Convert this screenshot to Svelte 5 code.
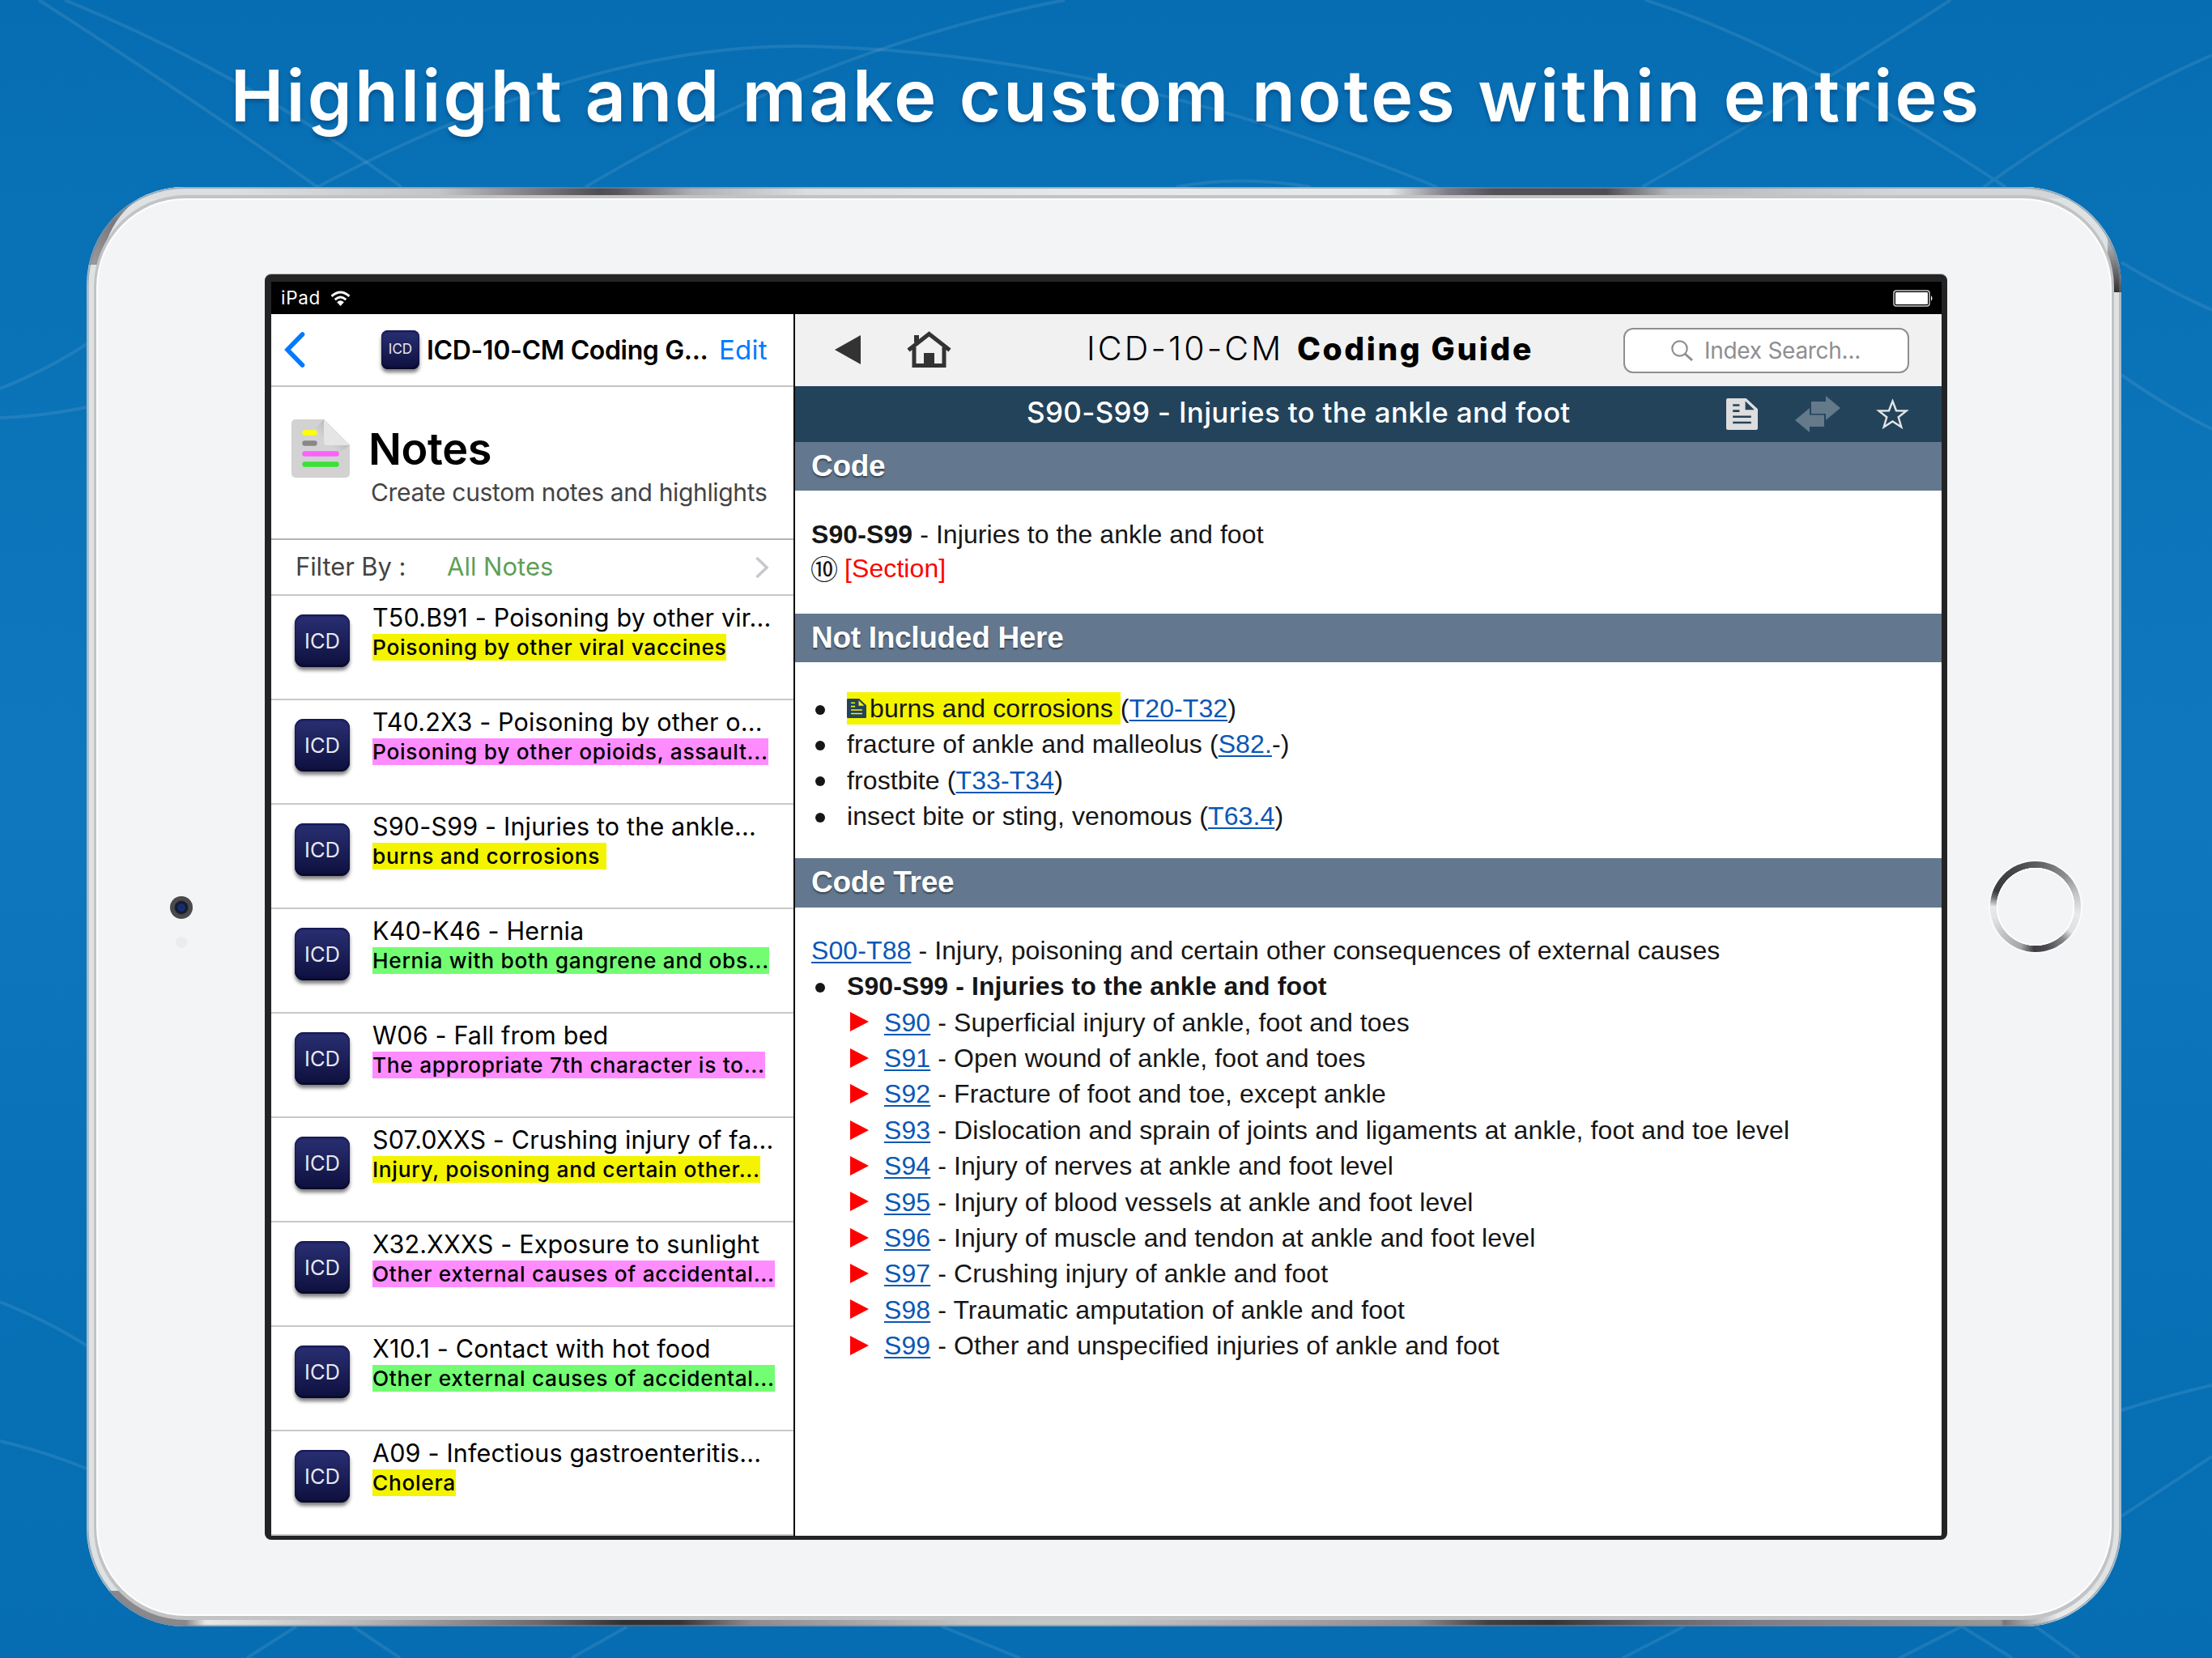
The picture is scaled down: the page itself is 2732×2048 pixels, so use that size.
<script>
  const notes = [
    { title: 'T50.B91 - Poisoning by other vir...', text: 'Poisoning by other viral vaccines', tone: 'yellow' },
    { title: 'T40.2X3 - Poisoning by other o...', text: 'Poisoning by other opioids, assault...', tone: 'pink' },
    { title: 'S90-S99 - Injuries to the ankle...', text: 'burns and corrosions ', tone: 'yellow' },
    { title: 'K40-K46 - Hernia', text: 'Hernia with both gangrene and obs...', tone: 'green' },
    { title: 'W06 - Fall from bed', text: 'The appropriate 7th character is to...', tone: 'pink' },
    { title: 'S07.0XXS - Crushing injury of fa...', text: 'Injury, poisoning and certain other...', tone: 'yellow' },
    { title: 'X32.XXXS - Exposure to sunlight', text: 'Other external causes of accidental...', tone: 'pink' },
    { title: 'X10.1 - Contact with hot food', text: 'Other external causes of accidental...', tone: 'green' },
    { title: 'A09 - Infectious gastroenteritis...', text: 'Cholera', tone: 'yellow' }
  ];

  const excluded = [
    { text: 'fracture of ankle and malleolus', link: 'S82.', tail: '-' },
    { text: 'frostbite', link: 'T33-T34', tail: '' },
    { text: 'insect bite or sting, venomous', link: 'T63.4', tail: '' }
  ];

  const tree = [
    ['S90', 'Superficial injury of ankle, foot and toes'],
    ['S91', 'Open wound of ankle, foot and toes'],
    ['S92', 'Fracture of foot and toe, except ankle'],
    ['S93', 'Dislocation and sprain of joints and ligaments at ankle, foot and toe level'],
    ['S94', 'Injury of nerves at ankle and foot level'],
    ['S95', 'Injury of blood vessels at ankle and foot level'],
    ['S96', 'Injury of muscle and tendon at ankle and foot level'],
    ['S97', 'Crushing injury of ankle and foot'],
    ['S98', 'Traumatic amputation of ankle and foot'],
    ['S99', 'Other and unspecified injuries of ankle and foot']
  ];
</script>

{#snippet page(cls)}
  <svg class={cls} viewBox="0 0 38 38" preserveAspectRatio="none">
    <path
      fill="currentColor"
      fill-rule="evenodd"
      d="M2 0H24L38 13V36a2 2 0 0 1-2 2H2a2 2 0 0 1-2-2V2A2 2 0 0 1 2 0ZM23 3.500V14H34ZM8 7H16V9.500H8ZM8 14H16V16.500H8ZM8 21H30V23.500H8ZM8 28H30V30.500H8Z"
    />
  </svg>
{/snippet}

<div class="page">
  <svg class="backdrop" viewBox="0 0 2732 2048">
    <g class="arcs">
      <path d="M48 0Q250 130 392 231M80 0Q300 90 496 231" />
      <path d="M392 231Q720 57 984 57Q1364 62 1775 231" />
      <path d="M723 231Q1010 60 1315 0" />
      <path d="M2032 0Q2220 60 2477 231M2409 0Q2240 110 2028 231M2732 68Q2590 130 2450 231" />
      <path d="M1453 231Q1531 216 1619 231" />
      <path d="M0 480Q60 456 107 425M0 516Q55 514 107 503M0 1608Q60 1632 107 1662M0 1780Q55 1793 107 1814" />
      <path d="M2620 324Q2680 360 2732 383M2620 463Q2680 505 2732 530M2620 1742Q2680 1723 2732 1711M2620 1873L2732 1799" />
      <path d="M366 2009L305 2048M436 2009L494 2048M775 2009L706 2048M1163 2009L1260 2048M2080 2009L2004 2048M2346 2048L2423 2009L2485 2048M2514 2009L2568 2048" />
    </g>
  </svg>

  <h1>Highlight and make custom notes within entries</h1>

  <div class="device">
    <svg class="shell" viewBox="0 0 2513 1778">
      <defs>
        <clipPath id="body"><rect width="2513" height="1778" rx="121" /></clipPath>
        <linearGradient id="top" x1="0" x2="1">
          <stop offset=".05" stop-color="#dcdfe0" /><stop offset=".157" stop-color="#c5c5c7" />
          <stop offset=".205" stop-color="#807d82" /><stop offset=".24" stop-color="#504d52" />
          <stop offset=".25" stop-color="#5a575c" /><stop offset=".288" stop-color="#b0b0b3" />
          <stop offset=".347" stop-color="#dadedf" /><stop offset=".5" stop-color="#e8e9e8" />
          <stop offset=".648" stop-color="#e5e7e7" /><stop offset=".678" stop-color="#807d85" />
          <stop offset=".702" stop-color="#545157" /><stop offset=".76" stop-color="#504d52" />
          <stop offset=".793" stop-color="#b5b6b9" /><stop offset=".91" stop-color="#d3d6d8" />
        </linearGradient>
        <linearGradient id="bottom" x1="0" x2="1">
          <stop offset=".04" stop-color="#8a888b" /><stop offset=".05" stop-color="#e8e8e8" />
          <stop offset=".128" stop-color="#b8b7b9" /><stop offset=".216" stop-color="#6e6a70" />
          <stop offset=".26" stop-color="#313035" /><stop offset=".288" stop-color="#353439" />
          <stop offset=".323" stop-color="#8f8a8e" /><stop offset=".435" stop-color="#c4c4c4" />
          <stop offset=".5" stop-color="#c4c6c6" /><stop offset=".562" stop-color="#b3aeb3" />
          <stop offset=".658" stop-color="#8f8b90" /><stop offset=".694" stop-color="#404045" />
          <stop offset=".725" stop-color="#333338" /><stop offset=".777" stop-color="#66646b" />
          <stop offset=".833" stop-color="#7f7d86" /><stop offset=".951" stop-color="#989898" />
          <stop offset=".953" stop-color="#77757b" /><stop offset=".98" stop-color="#e8eaea" />
        </linearGradient>
        <linearGradient id="corner" x1="0" y1="1" x2="1" y2="0">
          <stop stop-color="#a9a9ab" /><stop offset=".55" stop-color="#7a787c" /><stop offset="1" stop-color="#a9a9ab" />
        </linearGradient>
        <linearGradient id="side" x1="0" y1="0" x2="0" y2="1">
          <stop stop-color="#d9dcdd" /><stop offset="1" stop-color="#333237" />
        </linearGradient>
      </defs>
      <g clip-path="url(#body)">
        <rect width="2513" height="1778" fill="#dfe2e2" />
        <rect x="60" width="2390" height="14" fill="url(#top)" />
        <path d="M0 125V96H20V84Q30 36 70 10L56 0H0Z" fill="url(#corner)" />
        <path d="M2496 50H2513V130H2496Z" fill="url(#side)" />
        <rect x="24" y="1734" width="2460" height="44" fill="url(#bottom)" />
        <rect x="1.500" y="1" width="2510" height="1776" rx="120" fill="none" stroke="#6c8ca3" stroke-opacity=".6" stroke-width="2" />
      </g>
      <rect x="9" y="10" width="2495" height="1760" rx="113" fill="#c1c3c5" />
      <rect x="12" y="14" width="2489" height="1751" rx="110" fill="#fff" />
      <rect x="14" y="16" width="2485" height="1747" rx="108" fill="#f3f4f6" />
    </svg>

    <div class="side left">
      <span class="camera"></span>
      <span class="sensor"></span>
    </div>

    <div class="screen">
      <div class="status">
        <span class="carrier">iPad</span>
        <svg class="wifi" viewBox="0 0 24 18">
          <path d="M1.500 6.500Q12-3 22.500 6.500M5.500 10.500Q12 4.500 18.500 10.500" fill="none" stroke="#fff" stroke-width="2.800" />
          <path d="M12 18L7.800 13.500Q12 10 16.200 13.500Z" fill="#fff" />
        </svg>
        <svg class="battery" viewBox="0 0 50 21">
          <rect x="1" y="1" width="44" height="19" rx="3" fill="none" stroke="#ccc" stroke-width="1.500" />
          <rect x="3" y="3" width="40" height="15" rx="1" fill="#fff" />
          <path d="M47 7Q50 10.500 47 14Z" fill="#fff" />
        </svg>
      </div>

      <div class="panes">
        <aside>
          <header class="nav">
            <svg class="chev" viewBox="0 0 26 44"><path d="M22.500 3L4 22L22.500 41" fill="none" stroke="#007aff" stroke-width="5.600" stroke-linecap="round" /></svg>
            <span class="badge small">ICD</span>
            <strong>ICD-10-CM Coding G...</strong>
            <span class="edit">Edit</span>
          </header>

          <section class="intro">
            <svg class="doc" viewBox="0 0 72 72">
              <defs>
                <linearGradient id="fold" x1="0" y1="1" x2="1" y2="0"><stop offset=".45" stop-color="#d3d3d3" /><stop offset=".75" stop-color="#a6a6a6" /></linearGradient>
              </defs>
              <path d="M5 0H40L72 32V67a5 5 0 0 1-5 5H5a5 5 0 0 1-5-5V5A5 5 0 0 1 5 0Z" fill="#d2d2d2" />
              <path d="M40 0L20 22L48 50L72 32Z" fill="url(#fold)" opacity=".7" />
              <path d="M40 0L72 32H44a4 4 0 0 1-4-4Z" fill="#e5e5e5" />
              <g stroke-width="6.400" stroke-linecap="round">
                <path d="M16.500 16.500H28.500" stroke="#ff0" /><path d="M16.500 29.500H28.500" stroke="#888" />
                <path d="M16.500 42.500H55.500" stroke="#fa62fa" /><path d="M16.500 55.500H55.500" stroke="#38e236" />
              </g>
            </svg>
            <div class="words">
              <h2>Notes</h2>
              <p>Create custom notes and highlights</p>
            </div>
          </section>

          <div class="filter">
            <span class="label">Filter By :</span>
            <span class="value">All Notes</span>
            <svg class="more" viewBox="0 0 18 28"><path d="M2.500 2L15 14L2.500 26" fill="none" stroke="#c7c7cc" stroke-width="3.500" /></svg>
          </div>

          {#each notes as note}
            <article>
              <span class="badge">ICD</span>
              <div class="entry">
                <h3>{note.title}</h3>
                <mark class={note.tone}>{note.text}</mark>
              </div>
            </article>
          {/each}
        </aside>

        <main>
          <header class="bar">
            <svg class="back" viewBox="0 0 32 36"><path d="M32 0V36L0 18Z" fill="#333" /></svg>
            <svg class="home" viewBox="0 0 55 45">
              <path d="M9 20V42.500H46V20" fill="none" stroke="#333" stroke-width="5" />
              <path d="M2 23.500L27.500 3.500L53 23.500" fill="none" stroke="#333" stroke-width="5" />
              <path d="M9 5H15V14H9ZM21 27H34V43H21Z" fill="#333" />
            </svg>
            <div class="brand"><span class="thin">ICD-10-CM</span><b>Coding Guide</b></div>
            <div class="search">
              <svg viewBox="0 0 27 26"><circle cx="10.500" cy="10.500" r="9.200" fill="none" stroke="#8e8e93" stroke-width="2.200" /><path d="M17 17L26 25" stroke="#8e8e93" stroke-width="3" /></svg>
              <span>Index Search...</span>
            </div>
          </header>

          <div class="heading">
            <h2>S90-S99 - Injuries to the ankle and foot</h2>
            {@render page('pageicon')}
            <svg class="swap" viewBox="0 0 56 45">
              <path d="M38 0L56 15L38 30V22H20V7H38Z" fill="#64798a" />
              <path d="M18 15V23.500H36V38H18V45L0 30Z" fill="#64798a" />
            </svg>
            <svg class="star" viewBox="0 0 40 38"><path d="M20 3.500L24.500 15.300L37 15.500L27.200 23.300L30.800 35.500L20 28.500L9.200 35.500L12.800 23.300L3 15.500L15.500 15.300Z" fill="none" stroke="#e4e4e6" stroke-width="2.400" /></svg>
          </div>

          <h4>Code</h4>
          <div class="code">
            <p><b>S90-S99</b>{' - Injuries to the ankle and foot'}</p>
            <p class="section"><span class="ten">⑩</span><span>[Section]</span></p>
          </div>

          <h4>Not Included Here</h4>
          <ul class="excluded">
            <li><span class="hl">{@render page('mini')}<span>{'burns and corrosions '}</span></span><span>(<a href="#code">T20-T32</a>)</span></li>
            {#each excluded as row}
              <li><span>{row.text} (<a href="#code">{row.link}</a>{row.tail})</span></li>
            {/each}
          </ul>

          <h4>Code Tree</h4>
          <div class="tree">
            <p><a href="#code">S00-T88</a>{' - Injury, poisoning and certain other consequences of external causes'}</p>
            <ul>
              <li><b>S90-S99 - Injuries to the ankle and foot</b></li>
            </ul>
            {#each tree as [code, label]}
              <p class="leaf">
                <svg viewBox="0 0 23 24"><path d="M0 0L23 12L0 24Z" fill="#f00" /></svg>
                <span><a href="#code">{code}</a> - {label}</span>
              </p>
            {/each}
          </div>
        </main>
      </div>
    </div>

    <div class="side right"><span class="button"></span></div>
  </div>
</div>

<style>
  :global(body) { background: #0a70b6; }
  h1, h2, h3, h4, p, ul { margin: 0; padding: 0; font-weight: inherit; white-space: pre; }
  svg { display: block; flex: none; }
  .page {
    position: relative; width: 2732px; height: 2048px; overflow: hidden;
    font-family: Inter, "Liberation Sans", sans-serif; color: #000;
    background: linear-gradient(#076db2 0, #0870b5 230px, #0c74b9 630px, #0f77be 960px, #0c74ba 1260px, #0770b5 1660px, #066db2 2048px);
  }
  .backdrop { position: absolute; inset: 0; }
  .arcs { fill: none; stroke: #fff; stroke-opacity: .09; stroke-width: 4; }
  h1 {
    position: relative; height: 231px; line-height: 236px; text-align: center; font-size: 88px; font-weight: 600; letter-spacing: 3.200px;
    color: #fff; text-shadow: 0 4px 4px rgba(0, 40, 90, .35);
  }
  .device { position: relative; display: flex; width: 2513px; height: 1778px; margin-left: 107px; }
  .shell { position: absolute; inset: 0; }
  .side { position: relative; display: flex; flex-direction: column; align-items: center; }
  .left { width: 220px; padding-left: 7px; padding-top: 876px; gap: 22px; box-sizing: border-box; }
  .camera { width: 28px; height: 28px; margin-left: 7px; border-radius: 50%; background: radial-gradient(circle, #1a2a5e 0 2px, #16307c 4px, #0e1630 6px, #26262a 8px, #4a4a4d 9px 14px); }
  .sensor { width: 14px; height: 14px; margin-left: 7px; border-radius: 50%; background: #ebecee; }
  .right { width: 215px; padding-top: 833px; }
  .button {
    width: 112px; height: 112px; margin-left: 2px; border-radius: 50%; box-shadow: 0 0 0 2px #fafbfb;
    background: radial-gradient(circle, #f3f4f6 0 46px, #fff 47px 48px, transparent 48.500px),
      conic-gradient(#5d5c60, #8f8f92 45deg, #bfc2c2 70deg, #e8eae9 100deg, #dfe1e2 125deg, #85848a 140deg, #4c4a50 165deg, #3f3e43 182deg, #a5a5a7 200deg, #c2c5c7 230deg, #e3e5e5 255deg, #e8eaea 270deg, #6b6b6e 283deg, #3b3a3f 292deg, #46454a 330deg, #5d5c60);
  }
  .screen {
    position: relative; display: flex; flex-direction: column; box-sizing: border-box; width: 2078px; height: 1563px; margin-top: 108px;
    border: solid #242424; border-width: 9px 7px 5px 8px; border-radius: 8px; background: #fff; box-shadow: 0 -1px 0 #a5a7a9;
  }
  .status { display: flex; align-items: center; height: 40px; background: #000; color: #fff; flex: none; padding: 0 10px 0 12px; }
  .carrier { font-size: 22.500px; line-height: 42px; letter-spacing: .7px; }
  .wifi { width: 25px; height: 19px; margin-left: 12px; }
  .battery { width: 50px; height: 21px; margin-left: auto; }
  .panes { display: flex; flex: 1; min-height: 0; overflow: hidden; }
  aside { width: 645px; border-right: 2px solid #000; flex: none; }
  .nav { display: flex; align-items: center; height: 90px; box-sizing: border-box; border-bottom: 2px solid #c4c4c4; line-height: 89px; white-space: pre; }
  .chev { width: 26px; height: 44px; margin-left: 16px; }
  .badge {
    display: flex; align-items: center; justify-content: center; width: 68px; height: 65px; border-radius: 11px; flex: none; line-height: 1;
    background: linear-gradient(#292f73, #1c2059 50%, #0d0f3c); box-shadow: 0 4px 4px rgba(0, 0, 0, .5), inset 0 2px 2px #141852, inset 0 -2px 2px #070828;
    color: #e8e8ee; font-size: 25.500px; font-weight: 400;
  }
  .badge.small { width: 47px; height: 48px; margin-left: 94px; margin-top: -1px; border-radius: 8px; font-size: 17px; }
  .nav strong { width: 352px; margin-left: 9px; margin-right: 9px; font-size: 32px; font-weight: 600; letter-spacing: -.35px; }
  .edit { font-size: 33px; letter-spacing: .25px; color: #007aff; }
  .intro { display: flex; height: 189px; box-sizing: border-box; border-bottom: 2px solid #b4b4b4; }
  .doc { width: 72px; height: 72px; margin: 40px 0 0 25px; }
  .words { margin-left: 23px; }
  .words h2 { font-size: 54px; font-weight: 600; line-height: 64px; padding-top: 45px; letter-spacing: -.4px; }
  .words p { font-size: 30px; line-height: 40px; color: #444; padding: 1px 0 0 3px; letter-spacing: -.35px; }
  .filter { display: flex; align-items: center; height: 69px; box-sizing: border-box; border-bottom: 2px solid #c8c8c8; font-size: 31px; line-height: 66px; color: #444; white-space: pre; }
  .label { width: 187px; margin-left: 30px; margin-top: -1px; letter-spacing: -.1px; }
  .value { margin-top: -1px; color: #5f9f57; }
  .more { width: 18px; height: 28px; margin-left: auto; margin-right: 30px; }
  article { display: flex; height: 129px; box-sizing: border-box; border-bottom: 2px solid #c8c8c8; }
  article .badge { margin: 23px 0 0 29px; }
  .entry { display: flex; flex-direction: column; align-items: flex-start; margin-left: 28px; }
  h3 { font-size: 30.500px; line-height: 40px; padding-top: 7px; height: 40px; letter-spacing: .17px; }
  mark { font-size: 26.300px; line-height: 33px; font-weight: 550; letter-spacing: .69px; white-space: pre; color: #000; }
  .yellow { background: #f4f400; }
  .pink { background: #ff8cff; }
  .green { background: #73fd73; }

  main { flex: 1; min-width: 0; font-family: "Liberation Sans", Arial, sans-serif; }
  .bar { display: flex; align-items: center; height: 89px; box-sizing: border-box; padding-bottom: 2px; background: #f1f1f1; white-space: pre; }
  .back { width: 32px; height: 36px; margin-left: 49px; }
  .home { width: 55px; height: 45px; margin-left: 57px; }
  .brand { display: flex; align-items: baseline; width: 661px; margin: -2px 0 0 167px; font-family: Inter, sans-serif; font-size: 41px; line-height: 84px; }
  .thin { width: 260px; font-weight: 300; letter-spacing: 3.100px; }
  .brand b { font-weight: 800; font-size: 39px; letter-spacing: 2.600px; }
  .search {
    display: flex; align-items: center; box-sizing: border-box; width: 353px; height: 56px; margin-left: 2px; margin-top: 2px; padding-left: 57px; gap: 14px;
    border: 2px solid #8e8e93; border-radius: 12px; background: #fff; font: 28px/52px Inter, sans-serif; letter-spacing: -.28px; color: #8e8e93;
  }
  .search svg { width: 27px; height: 26px; }
  .heading { display: flex; align-items: center; height: 68.500px; background: #23435b; color: #fff; }
  .heading h2 { font: 500 35px/66px Inter, sans-serif; letter-spacing: .3px; width: 864px; margin: -4px 0 0 286px; }
  .pageicon { width: 39px; height: 39px; color: #dedede; }
  .swap { width: 56px; height: 45px; margin-left: 46px; }
  .star { width: 41px; height: 38px; margin-left: 44px; margin-top: -1px; }
  h4 { height: 60.500px; line-height: 60px; padding-left: 20px; background: #63788f; color: #fff; font-size: 37px; font-weight: 700; letter-spacing: -.3px; text-shadow: 0 2px 2px rgba(0, 0, 0, .45); }
  .code { height: 151.500px; box-sizing: border-box; padding: 32.500px 0 0 20px; font-size: 32px; line-height: 42.300px; letter-spacing: .09px; color: #161616; }
  .code p { height: 42.300px; }
  .code .section { display: flex; align-items: center; color: #f00; gap: 9px; }
  .ten { width: 32px; display: flex; justify-content: center; font-family: "Noto Sans CJK JP", sans-serif; font-size: 34px; line-height: 42px; color: #161616; }
  .excluded, .tree { font-size: 32px; line-height: 44.400px; letter-spacing: .1px; color: #161616; }
  .excluded { height: 242px; box-sizing: border-box; padding-top: 35px; }
  .tree { padding-top: 31.400px; }
  .tree p { height: 44.400px; padding-left: 20px; }
  ul { display: flex; flex-direction: column; list-style: none; }
  li { display: flex; align-items: center; height: 44.400px; padding-left: 25px; flex: none; }
  li::before { content: ""; width: 12px; height: 12px; margin: 3px 27px 0 0; border-radius: 50%; background: #161616; flex: none; }
  .hl { display: flex; align-items: center; height: 40px; background: #f4f400; line-height: 44px; }
  .mini { width: 24px; height: 24px; margin-right: 4px; color: #23435b; }
  a { color: #0a57b5; text-decoration: underline; text-decoration-thickness: 2px; text-underline-offset: 3px; }
  .tree .leaf { display: flex; align-items: center; padding-left: 68px; gap: 19px; }
  .leaf svg { width: 23px; height: 24px; margin-top: -1px; }
</style>
